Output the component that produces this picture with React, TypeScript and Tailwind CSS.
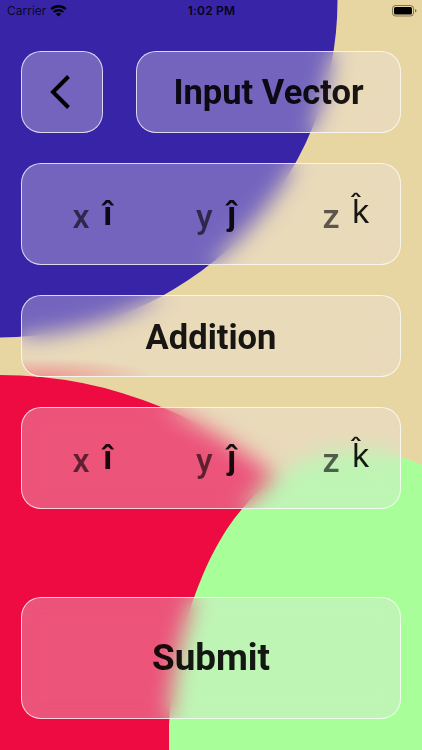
import type { ReactNode } from 'react'

type GlassProps = {
  className?: string
  children: ReactNode
}

type Axis = {
  label: string
  unit: string
  labelClass: string
  unitClass: string
}

const axes: Axis[] = [
  {
    label: 'x',
    unit: 'î',
    labelClass: 'left-[50.5px]',
    unitClass: "left-[81px] top-[29px] font-['Liberation_Sans',sans-serif] text-[34px] font-bold",
  },
  {
    label: 'y',
    unit: 'ĵ',
    labelClass: 'left-[174px]',
    unitClass: "left-[205px] top-[29px] font-['Liberation_Sans',sans-serif] text-[34px] font-bold",
  },
  {
    label: 'z',
    unit: 'k̂',
    labelClass: 'left-[300.5px]',
    unitClass: 'left-[330px] top-[28px] font-[Inter,sans-serif] text-[32px] font-normal',
  },
]

function Glass({ className = '', children }: GlassProps) {
  return (
    <div
      className={`relative flex items-center justify-center overflow-hidden rounded-[20px] border border-white/75 bg-[#eae3ea]/34 backdrop-blur-[11px] ${className}`}
    >
      {children}
    </div>
  )
}

function Backdrop() {
  return (
    <svg className="absolute inset-0" width="422" height="750" viewBox="0 0 422 750">
      <rect width="422" height="750" fill="#e8d6a2" />
      <circle cx="0" cy="0" r="337.5" fill="#3724a7" />
      <circle cx="0" cy="797" r="422" fill="#ed0b41" />
      <path d="M169 750V732C171 655 198 560 242 509C290 450 360 435 422 465V750Z" fill="#a8ff9a" />
    </svg>
  )
}

function StatusBar() {
  return (
    <div className="flex h-[22px] items-center justify-between pl-[7px] pr-[5px] font-[Inter,sans-serif] text-[12px] text-black/80">
      <div className="flex w-[120px] items-center gap-1">
        <span>Carrier</span>
        <svg width="17" height="12" viewBox="0 0 17 12" fill="none" stroke="#000" strokeWidth="2.3">
          <path d="M1.2 4.2a10.5 10.5 0 0 1 14.6 0" />
          <path d="M3.8 7a6.7 6.7 0 0 1 9.4 0" />
          <path d="M8.5 11.5 5.9 8.9a3.8 3.8 0 0 1 5.2 0Z" fill="#000" stroke="none" />
        </svg>
      </div>
      <span className="text-[12px] font-semibold tracking-[0.2px] text-black/90">1:02 PM</span>
      <div className="flex w-[121px] justify-end">
        <svg width="25" height="12" viewBox="0 0 25 12">
          <rect x="0.5" y="0.5" width="21" height="10.5" rx="3" fill="none" stroke="#000" strokeOpacity="0.45" />
          <rect x="2" y="2" width="18" height="7.5" rx="1.5" fill="#000" />
          <path d="M23 4v3.5q1.5-.6 1.5-1.75T23 4Z" fill="#000" fillOpacity="0.5" />
        </svg>
      </div>
    </div>
  )
}

function VectorRow({ className = '' }: { className?: string }) {
  return (
    <Glass className={`h-[102px] ${className}`}>
      {axes.map((axis) => (
        <div key={axis.label}>
          <span className={`absolute top-[32px] text-[34px] leading-[40px] font-medium text-black/60 ${axis.labelClass}`}>
            {axis.label}
          </span>
          <span className={`absolute leading-[40px] text-black/90 ${axis.unitClass}`}>
            {axis.unit}
          </span>
        </div>
      ))}
    </Glass>
  )
}

export default function App() {
  return (
    <div className="relative h-[750px] w-[422px] overflow-hidden font-[Roboto,sans-serif]">
      <Backdrop />
      <div className="relative flex h-full flex-col">
        <StatusBar />
        <div className="flex flex-col px-[21px] pt-[29px]">
          <div className="flex justify-between">
            <Glass className="h-[82px] w-[82px] pr-1">
              <svg width="20" height="34" viewBox="0 0 20 34" fill="none" stroke="#000" strokeWidth="4">
                <path d="M18.5 1.5 3 17 18.5 32.5" />
              </svg>
            </Glass>
            <Glass className="h-[82px] w-[265px]">
              <h1 className="text-[34.5px] leading-none font-bold text-black/90">Input Vector</h1>
            </Glass>
          </div>
          <VectorRow className="mt-[30px]" />
          <Glass className="mt-[30px] h-[82px] pt-0.5">
            {/* red glow from the circle right below this panel */}
            <div className="absolute bottom-0 left-0 h-[20px] w-[150px] bg-[radial-gradient(ellipse_110px_18px_at_20px_100%,rgba(237,80,100,0.45),rgba(237,80,100,0))]" />
            <span className="relative text-[34.5px] leading-none font-bold text-black/90">Addition</span>
          </Glass>
          <VectorRow className="mt-[30px]" />
          <Glass className="mt-[88px] h-[122px]">
            <span className="text-[36.8px] leading-none font-bold text-black/90">Submit</span>
          </Glass>
        </div>
      </div>
    </div>
  )
}
